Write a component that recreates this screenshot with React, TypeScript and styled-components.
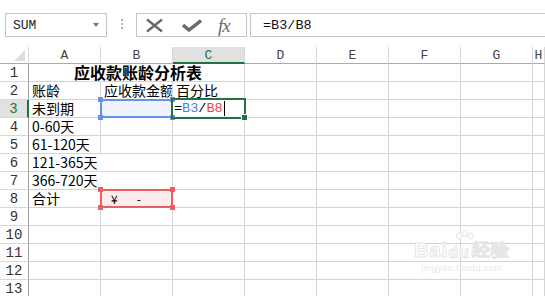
import React from 'react';
import styled, { createGlobalStyle } from 'styled-components';

const Global = createGlobalStyle`
  html, body { margin: 0; padding: 0; background: #fff; overflow: hidden; }
  body { width: 545px; height: 296px; font-family: "Noto Sans CJK SC", sans-serif; }
`;

const Page = styled.div`
  width: 545px;
  height: 296px;
  overflow: hidden;
  position: relative;
  background: #fff;
`;

const Toolbar = styled.div`
  height: 47px;
  box-sizing: border-box;
  padding-top: 13px;
  display: flex;
  align-items: flex-start;
`;

const NameBox = styled.div`
  position: relative;
  margin-left: 5px;
  width: 102px;
  height: 24px;
  box-sizing: border-box;
  border: 1px solid #c6c6c6;
  display: flex;
  align-items: center;
  padding-left: 7px;
  font: 13px "Liberation Mono", monospace;
  color: #222;
`;

const DropArrow = styled.span`
  position: absolute;
  right: 7px;
  top: 9px;
  width: 0;
  height: 0;
  border-left: 3.5px solid transparent;
  border-right: 3.5px solid transparent;
  border-top: 4px solid #777;
`;

const Grip = styled.div`
  margin-left: 14px;
  margin-top: 6px;
  display: flex;
  flex-direction: column;
  gap: 2px;
`;

const GripDot = styled.span`
  width: 2px;
  height: 2px;
  background: #b4b4b4;
`;

const FxBox = styled.div`
  margin-left: 13px;
  width: 111px;
  height: 24px;
  box-sizing: border-box;
  border: 1px solid #c6c6c6;
  display: flex;
  align-items: center;
  padding: 0 8px 0 8px;
  gap: 18px;
`;

const FxText = styled.span`
  font: italic 19px "Liberation Serif", serif;
  color: #6a6a6a;
  letter-spacing: -1px;
  margin-left: -2px;
  line-height: 1;
  margin-top: 1px;
`;

const FormulaInput = styled.div`
  margin-left: 3px;
  flex: 1;
  height: 24px;
  box-sizing: border-box;
  border: 1px solid #c6c6c6;
  border-right: none;
  display: flex;
  align-items: center;
  padding-left: 12px;
  font: 13.5px "Liberation Mono", monospace;
  color: #111;
`;

const Sheet = styled.div`
  display: grid;
  grid-template-columns: 29px repeat(7, 72px) 1fr;
  grid-template-rows: 17px repeat(13, 18px);
`;

const Corner = styled.div`
  position: relative;
  box-sizing: border-box;
  border-right: 1px solid #d8d8d8;
  border-bottom: 1px solid #ababab;
`;

const CornerTri = styled.span`
  position: absolute;
  right: 3px;
  bottom: 2px;
  width: 0;
  height: 0;
  border-left: 11px solid transparent;
  border-bottom: 11px solid #dcdcdc;
`;

const ColHead = styled.div<{ $active?: boolean }>`
  box-sizing: border-box;
  border-right: 1px solid #d8d8d8;
  border-bottom: ${(p) => (p.$active ? '2px solid #217346' : '1px solid #ababab')};
  background: ${(p) => (p.$active ? '#e1e1e1' : '#fff')};
  color: ${(p) => (p.$active ? '#217346' : '#444')};
  font: 13px "Liberation Mono", monospace;
  display: flex;
  align-items: center;
  justify-content: center;
  padding-top: ${(p) => (p.$active ? '1px' : '0')};
`;

const RowHead = styled.div<{ $active?: boolean }>`
  box-sizing: border-box;
  border-right: ${(p) => (p.$active ? '2px solid #217346' : '1px solid #9e9e9e')};
  border-bottom: 1px solid #d8d8d8;
  background: ${(p) => (p.$active ? '#e1e1e1' : '#fff')};
  color: ${(p) => (p.$active ? '#217346' : '#333')};
  font: 14px "Liberation Mono", monospace;
  display: flex;
  align-items: center;
  justify-content: center;
  padding-top: 1px;
`;

const Cell = styled.div<{ $noRight?: boolean; $clip?: boolean; $span?: number; $center?: boolean; $bold?: boolean; $bg?: string }>`
  position: relative;
  box-sizing: border-box;
  grid-column: ${(p) => (p.$span ? `span ${p.$span}` : 'auto')};
  border-right: 1px solid ${(p) => (p.$noRight ? 'transparent' : '#d4d4d4')};
  border-bottom: 1px solid #d4d4d4;
  background: ${(p) => p.$bg || 'transparent'};
  padding-left: 3px;
  display: flex;
  align-items: center;
  justify-content: ${(p) => (p.$center ? 'center' : 'flex-start')};
  font-size: ${(p) => (p.$bold ? '16px' : '14px')};
  font-weight: ${(p) => (p.$bold ? 700 : 400)};
  line-height: 17px;
  color: #000;
  white-space: nowrap;
  overflow: ${(p) => (p.$clip ? 'hidden' : 'visible')};
  z-index: ${(p) => (p.$noRight ? 1 : 'auto')};
`;

const Sel = styled.div<{ $color: string; $inset: number }>`
  position: absolute;
  top: ${(p) => -p.$inset}px;
  left: ${(p) => -p.$inset}px;
  right: ${(p) => -p.$inset}px;
  bottom: ${(p) => -p.$inset}px;
  border: 2px solid ${(p) => p.$color};
  pointer-events: none;
  z-index: 3;
`;

const Handle = styled.span<{ $color: string; $pos: string }>`
  position: absolute;
  width: 5px;
  height: 5px;
  background: ${(p) => p.$color};
  ${(p) => (p.$pos.includes('t') ? 'top: -4px;' : 'bottom: -4px;')}
  ${(p) => (p.$pos.includes('l') ? 'left: -4px;' : 'right: -4px;')}
`;

const FillHandle = styled.span`
  position: absolute;
  right: -4px;
  bottom: -4px;
  width: 5px;
  height: 5px;
  background: #217346;
  border: 1px solid #fff;
`;

const FormulaEdit = styled.span`
  font: 13.5px "Liberation Mono", monospace;
  display: flex;
  align-items: center;
  margin-left: -2px;
`;

const Ref = styled.span<{ $color: string }>`
  color: ${(p) => p.$color};
`;

const Caret = styled.span`
  display: inline-block;
  width: 1px;
  height: 15px;
  background: #000;
  margin-left: 1px;
`;

const Money = styled.span`
  font: 12px "Noto Sans CJK SC", sans-serif;
  display: flex;
  align-items: center;
  gap: 19px;
  margin-left: 7px;
  position: relative;
  z-index: 4;
`;

const Watermark = styled.div`
  position: absolute;
  left: 414px;
  top: 238px;
  display: flex;
  flex-direction: column;
  align-items: center;
  color: #fff;
  pointer-events: none;
  z-index: 5;
`;

const WmTitle = styled.div`
  position: relative;
  font: 700 20px "Liberation Sans", sans-serif;
  -webkit-text-stroke: 1px #e6e6e6;
  display: flex;
  align-items: flex-end;
  letter-spacing: 1px;
`;

const WmSmall = styled.span<{ $size: number; $ml?: number }>`
  font-size: ${(p) => p.$size}px;
  margin-left: ${(p) => p.$ml || 0}px;
`;

const WmSub = styled.div`
  font: 9px "Liberation Sans", sans-serif;
  color: #e8e8e8;
  letter-spacing: 0.5px;
  margin-top: 1px;
`;

const PawSvg = styled.svg`
  position: absolute;
  left: 38px;
  top: -8px;
`;

const cols = ['A', 'B', 'C', 'D', 'E', 'F', 'G', 'H'];

const rowsA: Record<number, string> = {
  2: '账龄',
  3: '未到期',
  4: '0-60天',
  5: '61-120天',
  6: '121-365天',
  7: '366-720天',
  8: '合计',
};

const XIcon = () => (
  <svg width="19" height="15" viewBox="0 0 19 15">
    <path d="M2 1.5 L17 13.5 M17 1.5 L2 13.5" stroke="#6a6a6a" strokeWidth="2.4" fill="none" />
  </svg>
);

const CheckIcon = () => (
  <svg width="20" height="13" viewBox="0 0 20 13">
    <path d="M1 6 L7 11 L19 1.5" stroke="#6a6a6a" strokeWidth="3.4" fill="none" strokeLinejoin="miter" />
  </svg>
);

const Paw = () => (
  <PawSvg width="26" height="22" viewBox="0 0 26 22">
    <g fill="#fff" stroke="#e4e4e4" strokeWidth="1">
      <ellipse cx="7" cy="6" rx="2.5" ry="3.2" />
      <ellipse cx="13" cy="3.5" rx="2.5" ry="3.2" />
      <ellipse cx="19" cy="6" rx="2.5" ry="3.2" />
    </g>
  </PawSvg>
);

export default function App() {
  const renderCell = (r: number, c: number) => {
    const key = `${r}-${c}`;
    if (r === 1) {
      if (c === 0) {
        return (
          <Cell key={key} $span={3} $center $bold>
            应收款账龄分析表
          </Cell>
        );
      }
      if (c < 3) return null;
      return <Cell key={key} />;
    }
    if (c === 0) {
      const t = rowsA[r];
      return (
        <Cell key={key} $noRight={r === 6 || r === 7}>
          {t}
        </Cell>
      );
    }
    if (c === 1 && r === 2) {
      return (
        <Cell key={key} $clip>
          应收款金额
        </Cell>
      );
    }
    if (c === 2 && r === 2) {
      return <Cell key={key}>百分比</Cell>;
    }
    if (c === 1 && r === 3) {
      return (
        <Cell key={key} $bg="#eef3fd">
          <Sel $color="#6591ea" $inset={1}>
            <Handle $color="#6591ea" $pos="tl" />
            <Handle $color="#6591ea" $pos="tr" />
            <Handle $color="#6591ea" $pos="bl" />
            <Handle $color="#6591ea" $pos="br" />
          </Sel>
        </Cell>
      );
    }
    if (c === 2 && r === 3) {
      return (
        <Cell key={key}>
          <FormulaEdit>
            =<Ref $color="#4a7fe0">B3</Ref>/<Ref $color="#e0484d">B8</Ref>
            <Caret />
          </FormulaEdit>
          <Sel $color="#217346" $inset={2}>
            <FillHandle />
          </Sel>
        </Cell>
      );
    }
    if (c === 1 && r === 8) {
      return (
        <Cell key={key} $bg="#fdecec">
          <Money>
            <span>¥</span>
            <span>-</span>
          </Money>
          <Sel $color="#ea5f63" $inset={1}>
            <Handle $color="#ea5f63" $pos="tl" />
            <Handle $color="#ea5f63" $pos="tr" />
            <Handle $color="#ea5f63" $pos="bl" />
            <Handle $color="#ea5f63" $pos="br" />
          </Sel>
        </Cell>
      );
    }
    return <Cell key={key} />;
  };

  return (
    <Page>
      <Global />
      <Toolbar>
        <NameBox>
          SUM
          <DropArrow />
        </NameBox>
        <Grip>
          <GripDot />
          <GripDot />
          <GripDot />
        </Grip>
        <FxBox>
          <XIcon />
          <CheckIcon />
          <FxText>fx</FxText>
        </FxBox>
        <FormulaInput>=B3/B8</FormulaInput>
      </Toolbar>
      <Sheet>
        <Corner>
          <CornerTri />
        </Corner>
        {cols.map((c) => (
          <ColHead key={c} $active={c === 'C'}>
            {c}
          </ColHead>
        ))}
        {Array.from({ length: 13 }, (_, i) => i + 1).map((r) => (
          <React.Fragment key={r}>
            <RowHead $active={r === 3}>{r}</RowHead>
            {cols.map((_, c) => renderCell(r, c))}
          </React.Fragment>
        ))}
      </Sheet>
      <Watermark>
        <WmTitle>
          <Paw />
          Bai<WmSmall $size={16}>du</WmSmall>
          <WmSmall $size={18} $ml={2}>经验</WmSmall>
        </WmTitle>
        <WmSub>jingyan.baidu.com</WmSub>
      </Watermark>
    </Page>
  );
}
